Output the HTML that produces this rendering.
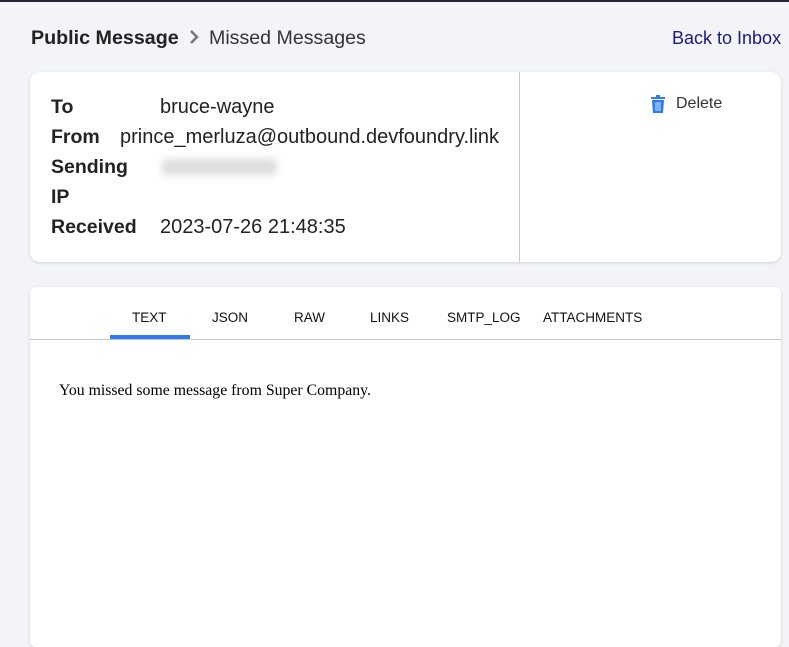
<!DOCTYPE html>
<html><head><style>
body{margin:0;width:789px;height:623px;background:#f3f4f8;font-family:"Liberation Sans",sans-serif;position:relative;overflow:hidden;color:#222}
.top{position:absolute;left:0;top:0;width:789px;height:2px;background:#23263a}
.a{position:absolute;white-space:nowrap}
.card{position:absolute;background:#fff;border-radius:10px;box-shadow:0 1px 3px rgba(0,0,0,.15)}
.lb{font-weight:bold;font-size:19.5px}
.v{font-size:20px}
.tab{position:absolute;top:310px;font-size:13.5px;color:#111}
</style></head><body>
<div class="top"></div>
<div class="a" style="left:31px;top:27px;font-size:19.7px;font-weight:bold;color:#222">Public Message</div>
<svg class="a" style="left:188px;top:29px" width="12" height="16" viewBox="0 0 12 16"><path d="M3 2l6 6-6 6" fill="none" stroke="#777" stroke-width="2.5"/></svg>
<div class="a" style="left:209px;top:27px;font-size:19.6px;color:#333">Missed Messages</div>
<div class="a" style="left:672px;top:28px;font-size:18px;color:#1a1a80">Back to Inbox</div>

<div class="card" style="left:30px;top:72px;width:751px;height:190px"></div>
<div class="a" style="left:519px;top:72px;width:1px;height:190px;background:#c9ccd2"></div>
<div class="a lb" style="left:51px;top:96px">To</div>
<div class="a v" style="left:160px;top:96px">bruce-wayne</div>
<div class="a lb" style="left:51px;top:126px">From</div>
<div class="a v" style="left:120px;top:126px">prince_merluza@outbound.devfoundry.link</div>
<div class="a lb" style="left:51px;top:156px">Sending</div>
<div class="a" style="left:162px;top:159px;width:115px;height:16px;background:#ddd;filter:blur(4px);border-radius:4px"></div>
<div class="a lb" style="left:51px;top:186px">IP</div>
<div class="a lb" style="left:51px;top:216px">Received</div>
<div class="a v" style="left:160px;top:216px">2023-07-26 21:48:35</div>
<svg class="a" style="left:651px;top:95px" width="14" height="18" viewBox="0 0 14 18"><rect x="0" y="2" width="14" height="2" fill="#2f7af0"/><rect x="5" y="0" width="4" height="2" fill="#2f7af0"/><path d="M1 5h12l-1 13H2z" fill="#2f7af0"/><path d="M5 7v9M7 7v9M9 7v9" stroke="#fff" stroke-width="0.8"/></svg>
<div class="a" style="left:676px;top:95px;font-size:16px;color:#333">Delete</div>

<div class="card" style="left:30px;top:287px;width:751px;height:360px;border-radius:6px"></div>
<div class="tab" style="left:132px">TEXT</div>
<div class="tab" style="left:212px">JSON</div>
<div class="tab" style="left:294px">RAW</div>
<div class="tab" style="left:370px">LINKS</div>
<div class="tab" style="left:447px">SMTP_LOG</div>
<div class="tab" style="left:543px">ATTACHMENTS</div>
<div class="a" style="left:110px;top:335px;width:80px;height:4px;background:#2f7af0"></div>
<div class="a" style="left:30px;top:339px;width:751px;height:1px;background:#c5c8cd"></div>
<div class="a" style="left:59px;top:382px;font-family:'Liberation Serif',serif;font-size:15.8px;color:#000">You missed some message from Super Company.</div>
</body></html>
